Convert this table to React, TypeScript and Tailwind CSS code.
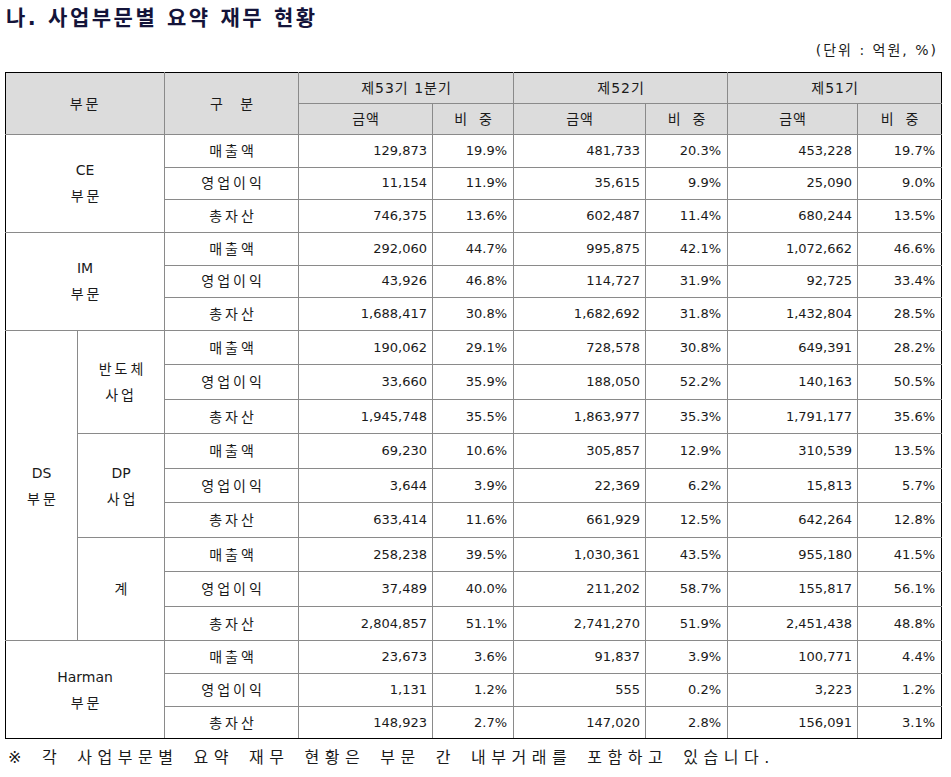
import React from "react";

type Row = [string, string, string, string, string, string, string];

const CE: Row[] = [
  ["매출액", "129,873", "19.9%", "481,733", "20.3%", "453,228", "19.7%"],
  ["영업이익", "11,154", "11.9%", "35,615", "9.9%", "25,090", "9.0%"],
  ["총자산", "746,375", "13.6%", "602,487", "11.4%", "680,244", "13.5%"],
];
const IM: Row[] = [
  ["매출액", "292,060", "44.7%", "995,875", "42.1%", "1,072,662", "46.6%"],
  ["영업이익", "43,926", "46.8%", "114,727", "31.9%", "92,725", "33.4%"],
  ["총자산", "1,688,417", "30.8%", "1,682,692", "31.8%", "1,432,804", "28.5%"],
];
const SEMI: Row[] = [
  ["매출액", "190,062", "29.1%", "728,578", "30.8%", "649,391", "28.2%"],
  ["영업이익", "33,660", "35.9%", "188,050", "52.2%", "140,163", "50.5%"],
  ["총자산", "1,945,748", "35.5%", "1,863,977", "35.3%", "1,791,177", "35.6%"],
];
const DP: Row[] = [
  ["매출액", "69,230", "10.6%", "305,857", "12.9%", "310,539", "13.5%"],
  ["영업이익", "3,644", "3.9%", "22,369", "6.2%", "15,813", "5.7%"],
  ["총자산", "633,414", "11.6%", "661,929", "12.5%", "642,264", "12.8%"],
];
const SUM: Row[] = [
  ["매출액", "258,238", "39.5%", "1,030,361", "43.5%", "955,180", "41.5%"],
  ["영업이익", "37,489", "40.0%", "211,202", "58.7%", "155,817", "56.1%"],
  ["총자산", "2,804,857", "51.1%", "2,741,270", "51.9%", "2,451,438", "48.8%"],
];
const HARMAN: Row[] = [
  ["매출액", "23,673", "3.6%", "91,837", "3.9%", "100,771", "4.4%"],
  ["영업이익", "1,131", "1.2%", "555", "0.2%", "3,223", "1.2%"],
  ["총자산", "148,923", "2.7%", "147,020", "2.8%", "156,091", "3.1%"],
];

const cell = "border border-[#8a8a8a] p-0";
const label = "text-[14px]";
const ko = "tracking-[3px] pl-[3px]";
const head = "font-normal text-[14px] tracking-[1px] pl-[1px]";

function Ko({ children }: { children: React.ReactNode }) {
  return <span className={ko}>{children}</span>;
}

function DataCells({ r, last }: { r: Row; last?: boolean }) {
  const b = last ? " border-b-black" : "";
  return (
    <>
      <td className={`${cell} text-center ${label}${b}`}>
        <Ko>{r[0]}</Ko>
      </td>
      {r.slice(1).map((v, i) => (
        <td
          key={i}
          className={`${cell} text-right ${i % 2 === 0 ? "pr-[5px]" : "pr-[6px]"}${b}${
            i === 5 ? " border-r-black" : ""
          }`}
        >
          {v}
        </td>
      ))}
    </>
  );
}

function Group({
  title,
  data,
  last,
}: {
  title: string;
  data: Row[];
  last?: boolean;
}) {
  return (
    <>
      {data.map((r, i) => (
        <tr key={i} className="h-[32.67px]">
          {i === 0 && (
            <td
              rowSpan={3}
              colSpan={2}
              className={`${cell} text-center leading-[26px] ${label} border-l-black${
                last ? " border-b-black" : ""
              }`}
            >
              {title}
              <br />
              <Ko>부문</Ko>
            </td>
          )}
          <DataCells r={r} last={last && i === 2} />
        </tr>
      ))}
    </>
  );
}

export default function App() {
  const font = {
    fontFamily: "'DejaVu Sans', 'Noto Sans CJK KR', sans-serif",
  };
  return (
    <div className="w-[951px] min-h-[777px] bg-white text-[#1a1a1a]" style={font}>
      <div className="pl-[6px] pt-[4px] h-[34px] text-[21px] leading-[28px] font-bold tracking-[2.5px] text-[#14143a]">
        나. 사업부문별 요약 재무 현황
      </div>
      <div className="h-[38px] pr-[13px] pt-[6px] text-right text-[14px] leading-[20px] tracking-[2px]">
        (단위 : 억원, %)
      </div>
      <div className="pl-[5px]">
        <table className="table-fixed border-collapse w-[936px] text-[13px] leading-[16px]">
          <colgroup>
            <col className="w-[72px]" />
            <col className="w-[87px]" />
            <col className="w-[134px]" />
            <col className="w-[134px]" />
            <col className="w-[81px]" />
            <col className="w-[132px]" />
            <col className="w-[82px]" />
            <col className="w-[130px]" />
            <col className="w-[84px]" />
          </colgroup>
          <thead className="bg-[#dcdcdc]">
            <tr className="h-[31px]">
              <th
                rowSpan={2}
                colSpan={2}
                className={`${cell} ${head} tracking-[3px] border-l-black border-t-black`}
              >
                부문
              </th>
              <th rowSpan={2} className={`${cell} ${head} border-t-black`}>
                구&nbsp;&nbsp;&nbsp;분
              </th>
              <th colSpan={2} className={`${cell} ${head} border-t-black`}>
                제53기 1분기
              </th>
              <th colSpan={2} className={`${cell} ${head} border-t-black`}>
                제52기
              </th>
              <th colSpan={2} className={`${cell} ${head} border-t-black border-r-black`}>
                제51기
              </th>
            </tr>
            <tr className="h-[31px]">
              <th className={`${cell} ${head}`}>금액</th>
              <th className={`${cell} ${head}`}>비&nbsp;&nbsp;중</th>
              <th className={`${cell} ${head}`}>금액</th>
              <th className={`${cell} ${head}`}>비&nbsp;&nbsp;중</th>
              <th className={`${cell} ${head}`}>금액</th>
              <th className={`${cell} ${head} border-r-black`}>비&nbsp;&nbsp;중</th>
            </tr>
          </thead>
          <tbody>
            <Group title="CE" data={CE} />
            <Group title="IM" data={IM} />
            {[
              { lbl: <Ko>반도체<br />사업</Ko>, data: SEMI },
              { lbl: <>DP<br /><Ko>사업</Ko></>, data: DP },
              { lbl: <Ko>계</Ko>, data: SUM },
            ].map((g, gi) =>
              g.data.map((r, i) => (
                <tr key={`${gi}-${i}`} className="h-[34.5px]">
                  {gi === 0 && i === 0 && (
                    <td
                      rowSpan={9}
                      className={`${cell} text-center leading-[26px] ${label} border-l-black`}
                    >
                      DS
                      <br />
                      <Ko>부문</Ko>
                    </td>
                  )}
                  {i === 0 && (
                    <td rowSpan={3} className={`${cell} text-center leading-[26px] ${label}`}>
                      {g.lbl}
                    </td>
                  )}
                  <DataCells r={r} />
                </tr>
              ))
            )}
            <Group title="Harman" data={HARMAN} last />
          </tbody>
        </table>
      </div>
      <div className="pl-[8px] pt-[8px] text-[16px] leading-[22px] tracking-[5.5px] [word-spacing:4.5px]">
        ※ 각 사업부문별 요약 재무 현황은 부문 간 내부거래를 포함하고 있습니다.
      </div>
    </div>
  );
}
